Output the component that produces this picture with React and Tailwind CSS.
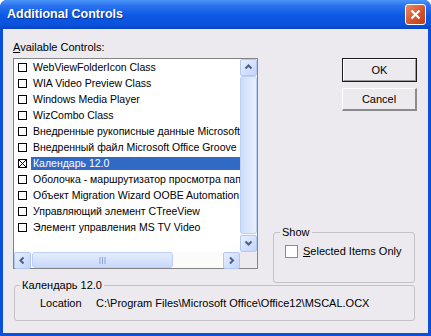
const items = [
  "WebViewFolderIcon Class",
  "WIA Video Preview Class",
  "Windows Media Player",
  "WizCombo Class",
  "Внедренные рукописные данные Microsoft",
  "Внедренный файл Microsoft Office Groove",
  "Календарь 12.0",
  "Оболочка - маршрутизатор просмотра папок",
  "Объект Migration Wizard OOBE Automation",
  "Управляющий элемент CTreeView",
  "Элемент управления MS TV Video",
];

const SELECTED = 6;

function Arrow({ dir }) {
  // small chevron used on the scrollbar buttons
  const d = {
    up: "M1.5 5.5 L4.5 2.5 L7.5 5.5",
    down: "M1.5 2.5 L4.5 5.5 L7.5 2.5",
    left: "M5.5 1.5 L2.5 4.5 L5.5 7.5",
    right: "M3 1.5 L6 4.5 L3 7.5",
  }[dir];
  return (
    <svg width="9" height="9" viewBox="0 0 9 9">
      <path d={d} fill="none" stroke="#4d6185" strokeWidth="2" />
    </svg>
  );
}

function ScrollBtn({ dir }) {
  return (
    <div className="flex h-[17px] w-[17px] shrink-0 items-center justify-center rounded-[2px] border border-[#b4c8f6] bg-[linear-gradient(135deg,#e8effe,#c3d4fb)]">
      <Arrow dir={dir} />
    </div>
  );
}

function Box({ checked }) {
  return (
    <span className="flex h-[9px] w-[9px] shrink-0 items-center justify-center border border-black bg-white">
      {checked && (
        <svg width="7" height="7" viewBox="0 0 7 7">
          <path d="M0 0 L7 7 M7 0 L0 7" stroke="#000" strokeWidth="1" />
        </svg>
      )}
    </span>
  );
}

export default function App() {
  return (
    <div className="flex h-[336px] w-[431px] flex-col overflow-hidden rounded-t-[7px] bg-[#0b50dc] font-['Liberation_Sans',Arial,sans-serif] text-[11px] leading-[13px] text-black">
      {/* title bar */}
      <div className="flex h-[29px] shrink-0 items-center justify-between bg-[linear-gradient(180deg,#4a95f8_0%,#2a72ee_20%,#0c58e4_55%,#0a52dc_85%,#0a44c4_100%)] pl-[7px] pr-[5px]">
        <span className="text-[12.5px] font-bold text-white [text-shadow:1px_1px_0_#0b2f8f]">Additional Controls</span>
        <div className="flex h-[21px] w-[21px] items-center justify-center rounded-[3px] border border-white bg-[linear-gradient(135deg,#ec8a63,#d2512a_60%,#c1401c)]">
          <svg width="11" height="11" viewBox="0 0 11 11">
            <path d="M1.5 1.5 L9.5 9.5 M9.5 1.5 L1.5 9.5" stroke="#fff" strokeWidth="2.2" />
          </svg>
        </div>
      </div>

      {/* client area */}
      <div className="mx-[3px] mb-[3px] flex flex-1 flex-col bg-[#eceaee] pl-[10px] pr-[11px] pt-[9px]">
        <div className="flex h-[245px]">
          {/* left column */}
          <div className="flex w-[245px] flex-col">
            <div className="mb-[4px] mt-[3px]">
              <span className="underline">A</span>vailable Controls:
            </div>
            <div className="flex h-[211px] flex-col border border-[#848484] bg-white">
              <div className="flex flex-1">
                <div className="flex-1 overflow-hidden text-[10.5px]">
                  {items.map((t, i) => (
                    <div key={i} className="flex h-[16px] items-center">
                      <span className="ml-[4px]">
                        <Box checked={i === SELECTED} />
                      </span>
                      <span
                        className={
                          i === SELECTED
                            ? "ml-[4px] flex-1 whitespace-nowrap bg-[#316ac5] pl-[2px] text-white"
                            : "ml-[4px] flex-1 whitespace-nowrap pl-[2px]"
                        }
                      >
                        {t}
                      </span>
                    </div>
                  ))}
                </div>
                {/* vertical scrollbar */}
                <div className="flex w-[17px] flex-col bg-[#f6f8fd]">
                  <ScrollBtn dir="up" />
                  <div className="mb-[1px] flex-1 rounded-[3px] border border-[#bccff7] bg-[linear-gradient(90deg,#cddcfb,#e9f0fd)]" />
                  <ScrollBtn dir="down" />
                </div>
              </div>
              {/* horizontal scrollbar */}
              <div className="flex h-[16px]">
                <div className="flex flex-1 bg-[#fbfbf9]">
                  <ScrollBtn dir="left" />
                  <div className="ml-[1px] flex w-[141px] items-center justify-center rounded-[3px] border border-[#bccff7] bg-[linear-gradient(180deg,#e6eefd,#c9d9fb)]">
                    <svg width="8" height="7" viewBox="0 0 8 7">
                      <path d="M1 0 V7 M3.5 0 V7 M6 0 V7" stroke="#8aa4dc" strokeWidth="1" />
                    </svg>
                  </div>
                  <div className="flex-1" />
                  <ScrollBtn dir="right" />
                </div>
                <div className="w-[17px] bg-[#eceaee]" />
              </div>
            </div>
          </div>

          {/* right column */}
          <div className="ml-[15px] flex w-[144px] flex-col pt-[20px]">
            <div className="self-end">
              <div className="flex h-[24px] w-[75px] items-center justify-center border border-[#1c1c1c]">
                <div className="flex h-full w-full items-center justify-center border-b border-l border-r border-t border-b-[#9a9a9a] border-l-white border-r-[#9a9a9a] border-t-white">
                  OK
                </div>
              </div>
              <div className="mt-[6px] flex h-[23px] w-[75px] items-center justify-center border-b-2 border-l border-r-2 border-t border-b-[#8c8c8c] border-l-white border-r-[#8c8c8c] border-t-white">
                Cancel
              </div>
            </div>
            <fieldset className="mt-auto h-[57px] w-[142px] rounded-[3px] border border-[#c3c1c6]">
              <legend className="ml-[6px] px-[2px]">Show</legend>
              <div className="flex items-center pl-[11px] pt-[6px]">
                <span className="h-[13px] w-[13px] border border-[#8c8c8c] bg-white" />
                <span className="ml-[5px]">
                  <span className="underline">S</span>elected Items Only
                </span>
              </div>
            </fieldset>
          </div>
        </div>

        {/* bottom group */}
        <fieldset className="-mt-[4px] ml-[1px] h-[42px] w-[401px] rounded-[3px] border border-[#c3c1c6]">
          <legend className="ml-[5px] px-[2px]">Календарь 12.0</legend>
          <div className="flex pl-[25px] pt-[5px]">
            <span className="w-[56px]">Location</span>
            <span>C:\Program Files\Microsoft Office\Office12\MSCAL.OCX</span>
          </div>
        </fieldset>
      </div>
    </div>
  );
}
